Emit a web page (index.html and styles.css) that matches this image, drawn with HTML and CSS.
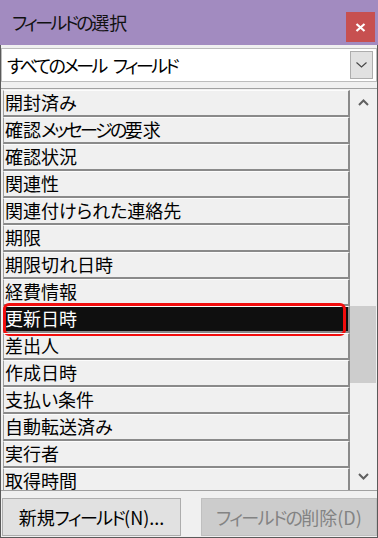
FILE: index.html
```html
<!DOCTYPE html>
<html lang="ja">
<head>
    <meta charset="UTF-8">
    <meta name="viewport" content="width=device-width, initial-scale=1.0">
    <title>フィールドの選択</title>
    <link rel="stylesheet" href="styles.css">
</head>
<body>
    <div class="window">
        <div class="titlebar">
            <span class="title"><span class="kana">フィールドの</span>選択</span>
            <div class="close">
                <svg width="11" height="9" viewBox="0 0 11 9"><path d="M1.5 1 L9.5 8 M9.5 1 L1.5 8" stroke="#fff" stroke-width="2.2"/></svg>
            </div>
        </div>
        <div class="frame">
            <div class="combo">
                <span class="combo-text"><span class="kana">すべてのメール</span> <span class="kana">フィールド</span></span>
                <div class="combo-btn">
                    <svg width="11" height="6" viewBox="0 0 11 6"><path d="M0.5 0.5 L5.5 5 L10.5 0.5" fill="none" stroke="#444" stroke-width="1.1"/></svg>
                </div>
            </div>
            <div class="list">
                <div class="items">
                    <div class="item">開封済み</div>
                    <div class="item">確認<span class="kana">メッセージの</span>要求</div>
                    <div class="item">確認状況</div>
                    <div class="item">関連性</div>
                    <div class="item">関連付けられた連絡先</div>
                    <div class="item">期限</div>
                    <div class="item">期限切れ日時</div>
                    <div class="item">経費情報</div>
                    <div class="item selected">更新日時</div>
                    <div class="item">差出人</div>
                    <div class="item">作成日時</div>
                    <div class="item">支払い条件</div>
                    <div class="item">自動転送済み</div>
                    <div class="item">実行者</div>
                    <div class="item">取得時間</div>
                </div>
                <div class="scrollbar">
                    <div class="arrow">
                        <svg width="11" height="7" viewBox="0 0 11 7"><path d="M1 6 L5.5 1.5 L10 6" fill="none" stroke="#606060" stroke-width="2"/></svg>
                    </div>
                    <div class="track">
                        <div class="thumb"></div>
                    </div>
                    <div class="arrow">
                        <svg width="11" height="7" viewBox="0 0 11 7"><path d="M1 1 L5.5 5.5 L10 1" fill="none" stroke="#606060" stroke-width="2"/></svg>
                    </div>
                </div>
            </div>
            <div class="buttons">
                <button class="btn">新規<span class="kana-sm">フィールド</span>(N)...</button>
                <button class="btn" disabled><span class="kana-sm">フィールドの</span>削除(D)</button>
            </div>
        </div>
    </div>
</body>
</html>
```

FILE: styles.css
```css
body {
    margin: 0;
    font-family: "Noto Sans CJK JP", "Noto Sans", sans-serif;
    font-feature-settings: "palt";
    background-color: #f0f0f0;
}
.window {
    width: 378px;
    height: 538px;
}
/* Meiryo UI kana run narrower than Noto's */
.kana {
    letter-spacing: -2.6px;
}
.kana-sm {
    letter-spacing: -1.6px;
}
.titlebar {
    height: 45px;
    background-color: #a28bc0;
    display: flex;
    align-items: center;
    padding-left: 12px;
    box-sizing: border-box;
}
.title {
    font-size: 18px;
    color: #111;
    flex: 1;
    margin-top: -1px;
}
.close {
    width: 29px;
    height: 30px;
    margin-right: 3px;
    margin-top: 9px;
    background-color: #c75050;
    display: flex;
    align-items: center;
    justify-content: center;
}
.frame {
    height: 493px;
    box-sizing: border-box;
    border: 1px solid #5a5a5a;
    border-top: none;
    padding-top: 3px;
    background-color: #f0f0f0;
}
.combo {
    height: 34px;
    box-sizing: border-box;
    background: white;
    border: 1px solid #bcbcbc;
    display: flex;
    align-items: center;
    padding: 0 3px 0 5px;
}
.combo-text {
    flex: 1;
    font-size: 18px;
    color: #000;
    word-spacing: 3px;
}
.combo-btn {
    width: 23px;
    height: 28px;
    box-sizing: border-box;
    background-color: #e1e1e1;
    border: 1px solid #adadad;
    display: flex;
    align-items: center;
    justify-content: center;
}
.list {
    margin-top: 6px;
    height: 403px;
    box-sizing: border-box;
    border-top: 1px solid #a0a0a0;
    border-bottom: 1px solid #a0a0a0;
    display: flex;
    overflow: hidden;
}
.items {
    width: 349px;
    padding: 1px 0 0 2px;
    box-sizing: border-box;
    overflow: hidden;
}
.item {
    position: relative;
    height: 27px;
    box-sizing: border-box;
    border-top: 1px solid #fcfcfc;
    border-left: 1px solid #a0a0a0;
    border-right: 2px solid #8a8a8a;
    border-bottom: 2px solid #8a8a8a;
    padding-left: 1px;
    font-size: 18px;
    line-height: 23px;
    color: #000;
    white-space: nowrap;
}
.item.selected {
    background-color: #0f0f0f;
    color: #fff;
}
.item.selected::after {
    content: "";
    position: absolute;
    left: -1px;
    right: 2px;
    top: -4px;
    bottom: -5px;
    border: 3px solid #f20d0d;
    border-radius: 6px;
}
.scrollbar {
    width: 27px;
    display: flex;
    flex-direction: column;
    background-color: #f0f0f0;
}
.arrow {
    height: 27px;
    display: flex;
    align-items: center;
    justify-content: center;
}
.track {
    flex: 1;
    position: relative;
}
.thumb {
    position: absolute;
    left: 0;
    right: 1px;
    top: 190px;
    height: 77px;
    background-color: #cdcdcd;
}
.buttons {
    display: flex;
    justify-content: space-between;
    padding: 7px 0 0 1px;
}
.btn {
    height: 38px;
    width: 179px;
    font-family: inherit;
    font-feature-settings: "palt";
    font-size: 18px;
    color: #000;
    background-color: #e1e1e1;
    border: 1px solid #adadad;
    padding: 0;
}
.btn:disabled {
    width: 176px;
    color: #838383;
    background-color: #cccccc;
    border-color: #bfbfbf;
}
```
